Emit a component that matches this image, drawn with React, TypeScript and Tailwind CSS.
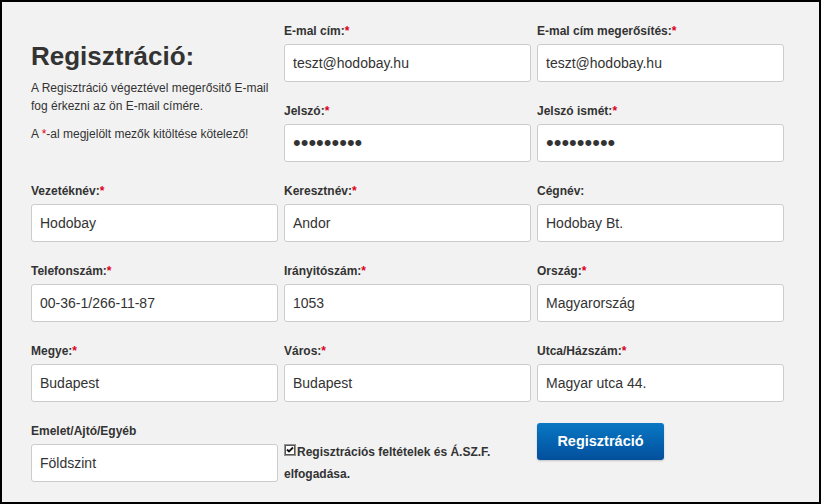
import type { ReactNode } from "react";

const FONT = { fontFamily: '"Liberation Sans", Arial, sans-serif' };

function Label({ children, required }: { children: ReactNode; required?: boolean }) {
  return (
    <div className="h-4 text-[12px] font-bold leading-4 text-[#333]">
      {children}
      {required && <span className="text-[#e0001a]">*</span>}
    </div>
  );
}

function Field({
  label,
  value,
  required = true,
  password = false,
}: {
  label: string;
  value: string;
  required?: boolean;
  password?: boolean;
}) {
  return (
    <div className="h-20">
      <Label required={required}>{label}</Label>
      <input
        type={password ? "password" : "text"}
        defaultValue={value}
        className={
          password
            ? "mt-[5px] block h-[38px] w-full rounded-[3px] border border-[#cccccc] bg-white pl-2 text-[22px] text-[#333] outline-none"
            : "mt-[5px] block h-[38px] w-full rounded-[3px] border border-[#cccccc] bg-white pl-2 text-[14px] text-[#333] outline-none"
        }
        style={FONT}
      />
    </div>
  );
}

function CheckIcon() {
  return (
    <svg width="12" height="12" viewBox="0 0 12 12" className="inline-block align-[0px]" aria-hidden>
      <rect x="0.5" y="0.5" width="11" height="11" fill="none" stroke="#333" strokeDasharray="1 1" />
      <rect x="1.5" y="1.5" width="9" height="9" fill="#fff" stroke="#555" />
      <path d="M3 5.5 L5 7.5 L9 3.5" fill="none" stroke="#111" strokeWidth="1.8" />
    </svg>
  );
}

export default function App() {
  return (
    <div className="h-[504px] w-[821px] border-2 border-black bg-[#f2f2f2]" style={FONT}>
      <div className="grid grid-cols-[247px_247px_247px] gap-x-[6px] pl-[29px] pt-[21px]">
        <div className="row-span-2">
          <h1 className="mt-[18px] text-[26px] font-bold leading-[30px] text-[#333]">Regisztráció:</h1>
          <p className="mt-2 text-[12px] leading-[18px] text-[#333]">
            A Regisztráció végeztével megerősitő E-mail fog érkezni az ön E-mail címére.
          </p>
          <p className="mt-[10px] text-[12px] leading-[18px] text-[#333]">
            A <span className="text-[#e0001a]">*</span>-al megjelölt mezők kitöltése kötelező!
          </p>
        </div>
        <Field label="E-mal cím:" value="teszt@hodobay.hu" />
        <Field label="E-mal cím megerősítés:" value="teszt@hodobay.hu" />
        <Field label="Jelszó:" value="123456789" password />
        <Field label="Jelszó ismét:" value="123456789" password />

        <Field label="Vezetéknév:" value="Hodobay" />
        <Field label="Keresztnév:" value="Andor" />
        <Field label="Cégnév:" value="Hodobay Bt." required={false} />

        <Field label="Telefonszám:" value="00-36-1/266-11-87" />
        <Field label="Irányitószám:" value="1053" />
        <Field label="Ország:" value="Magyarország" />

        <Field label="Megye:" value="Budapest" />
        <Field label="Város:" value="Budapest" />
        <Field label="Utca/Házszám:" value="Magyar utca 44." />

        <Field label="Emelet/Ajtó/Egyéb" value="Földszint" required={false} />
        <div className="pt-[18px]">
          <p className="text-[12px] font-bold leading-[22px] text-[#333]">
            <CheckIcon />
            <span className="pl-px">Regisztrációs feltételek és Á.SZ.F. elfogadása.</span>
          </p>
        </div>
        <div>
          <button
            type="button"
            className="h-[37px] w-[127px] rounded-[3px] bg-gradient-to-b from-[#0a78c4] to-[#034f9c] text-[14.5px] font-bold text-white shadow-[0_1px_2px_rgba(0,0,0,0.2)]"
          >
            Regisztráció
          </button>
        </div>
      </div>
    </div>
  );
}
